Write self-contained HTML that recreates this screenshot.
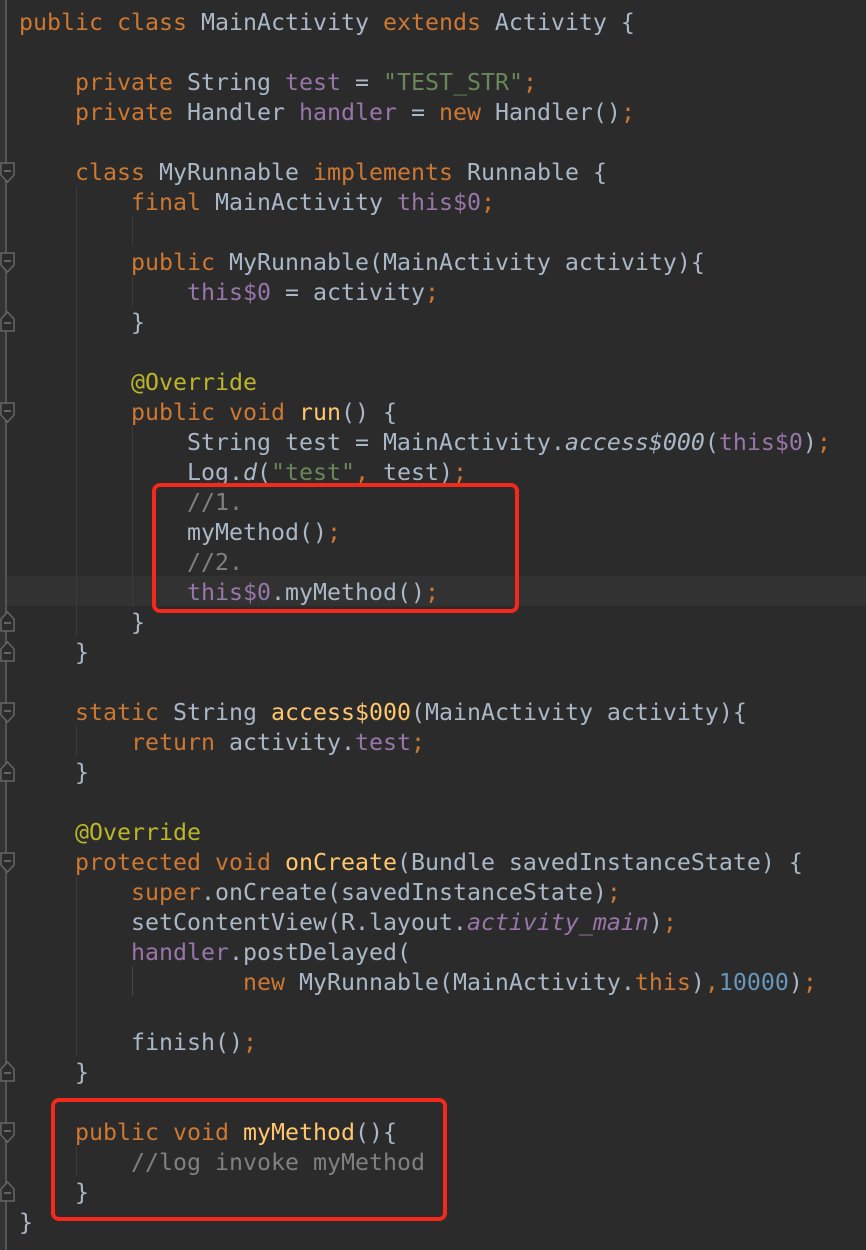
<!DOCTYPE html>
<html><head><meta charset="utf-8"><style>
html,body{margin:0;padding:0;}
body{width:866px;height:1250px;background:#2b2b2b;position:relative;overflow:hidden;font-family:"DejaVu Sans Mono","Liberation Mono",monospace;font-size:23.25px;color:#a9b7c6;}
.gut{position:absolute;left:0;top:0;width:6px;height:1250px;background:#313335;}
.gl{position:absolute;left:5px;top:0;width:2px;height:1250px;background:#555;}
.l{position:absolute;left:19px;height:30px;line-height:30px;white-space:pre;margin-top:2px;}
.k{color:#cc7832}.f{color:#9876aa}.s{color:#6a8759}.c{color:#808080}.a{color:#bbb529}.m{color:#ffc66d}.n{color:#6897bb}.i{font-style:italic}
.fi{color:#9876aa;font-style:italic}
.cur{position:absolute;left:7px;top:576px;width:859px;height:30px;background:#323232;}
.ig{position:absolute;width:1px;background:#3b3b3b;}
.box{position:absolute;border:4px solid #f5281c;border-radius:8px;box-sizing:border-box;}
svg.fm{position:absolute;left:0;}
</style></head><body>
<div class="gut"></div><div class="gl"></div>
<div class="cur"></div>
<div class="ig" style="left:76px;top:186px;height:450px"></div>
<div class="ig" style="left:132px;top:216px;height:30px"></div>
<div class="ig" style="left:132px;top:276px;height:30px"></div>
<div class="ig" style="left:132px;top:426px;height:180px"></div>
<div class="ig" style="left:76px;top:726px;height:30px"></div>
<div class="ig" style="left:76px;top:876px;height:180px"></div>
<div class="ig" style="left:132px;top:966px;height:30px;background:#444"></div>
<div class="ig" style="left:76px;top:1146px;height:30px"></div>

<svg class="fm" style="top:162px" width="16" height="22"><path d="M1 1H14V13L7.5 20L1 13Z" fill="#2b2b2b" stroke="#666" stroke-width="1.5"/><path d="M4 9H11" stroke="#777" stroke-width="1.5"/></svg>
<svg class="fm" style="top:252px" width="16" height="22"><path d="M1 1H14V13L7.5 20L1 13Z" fill="#2b2b2b" stroke="#666" stroke-width="1.5"/><path d="M4 9H11" stroke="#777" stroke-width="1.5"/></svg>
<svg class="fm" style="top:310px" width="16" height="22"><path d="M1 21H14V9L7.5 2L1 9Z" fill="#2b2b2b" stroke="#666" stroke-width="1.5"/><path d="M4 13H11" stroke="#777" stroke-width="1.5"/></svg>
<svg class="fm" style="top:402px" width="16" height="22"><path d="M1 1H14V13L7.5 20L1 13Z" fill="#2b2b2b" stroke="#666" stroke-width="1.5"/><path d="M4 9H11" stroke="#777" stroke-width="1.5"/></svg>
<svg class="fm" style="top:610px" width="16" height="22"><path d="M1 21H14V9L7.5 2L1 9Z" fill="#2b2b2b" stroke="#666" stroke-width="1.5"/><path d="M4 13H11" stroke="#777" stroke-width="1.5"/></svg>
<svg class="fm" style="top:640px" width="16" height="22"><path d="M1 21H14V9L7.5 2L1 9Z" fill="#2b2b2b" stroke="#666" stroke-width="1.5"/><path d="M4 13H11" stroke="#777" stroke-width="1.5"/></svg>
<svg class="fm" style="top:702px" width="16" height="22"><path d="M1 1H14V13L7.5 20L1 13Z" fill="#2b2b2b" stroke="#666" stroke-width="1.5"/><path d="M4 9H11" stroke="#777" stroke-width="1.5"/></svg>
<svg class="fm" style="top:760px" width="16" height="22"><path d="M1 21H14V9L7.5 2L1 9Z" fill="#2b2b2b" stroke="#666" stroke-width="1.5"/><path d="M4 13H11" stroke="#777" stroke-width="1.5"/></svg>
<svg class="fm" style="top:852px" width="16" height="22"><path d="M1 1H14V13L7.5 20L1 13Z" fill="#2b2b2b" stroke="#666" stroke-width="1.5"/><path d="M4 9H11" stroke="#777" stroke-width="1.5"/></svg>
<svg class="fm" style="top:1060px" width="16" height="22"><path d="M1 21H14V9L7.5 2L1 9Z" fill="#2b2b2b" stroke="#666" stroke-width="1.5"/><path d="M4 13H11" stroke="#777" stroke-width="1.5"/></svg>
<svg class="fm" style="top:1122px" width="16" height="22"><path d="M1 1H14V13L7.5 20L1 13Z" fill="#2b2b2b" stroke="#666" stroke-width="1.5"/><path d="M4 9H11" stroke="#777" stroke-width="1.5"/></svg>
<svg class="fm" style="top:1180px" width="16" height="22"><path d="M1 21H14V9L7.5 2L1 9Z" fill="#2b2b2b" stroke="#666" stroke-width="1.5"/><path d="M4 13H11" stroke="#777" stroke-width="1.5"/></svg>

<div class="l" style="top:6px"><span class="k">public class</span> MainActivity <span class="k">extends</span> Activity {</div>
<div class="l" style="top:66px">    <span class="k">private</span> String <span class="f">test</span> = <span class="s">"TEST_STR"</span><span class="k">;</span></div>
<div class="l" style="top:96px">    <span class="k">private</span> Handler <span class="f">handler</span> = <span class="k">new</span> Handler()<span class="k">;</span></div>
<div class="l" style="top:156px">    <span class="k">class</span> MyRunnable <span class="k">implements</span> Runnable {</div>
<div class="l" style="top:186px">        <span class="k">final</span> MainActivity <span class="f">this$0</span><span class="k">;</span></div>
<div class="l" style="top:246px">        <span class="k">public</span> MyRunnable(MainActivity activity){</div>
<div class="l" style="top:276px">            <span class="f">this$0</span> = activity<span class="k">;</span></div>
<div class="l" style="top:306px">        }</div>
<div class="l" style="top:366px">        <span class="a">@Override</span></div>
<div class="l" style="top:396px">        <span class="k">public void</span> <span class="m">run</span>() {</div>
<div class="l" style="top:426px">            String test = MainActivity.<span class="i">access$000</span>(<span class="f">this$0</span>)<span class="k">;</span></div>
<div class="l" style="top:456px">            Log.<span class="i">d</span>(<span class="s">"test"</span><span class="k">,</span> test)<span class="k">;</span></div>
<div class="l" style="top:486px">            <span class="c">//1.</span></div>
<div class="l" style="top:516px">            myMethod()<span class="k">;</span></div>
<div class="l" style="top:546px">            <span class="c">//2.</span></div>
<div class="l" style="top:576px">            <span class="f">this$0</span>.myMethod()<span class="k">;</span></div>
<div class="l" style="top:606px">        }</div>
<div class="l" style="top:636px">    }</div>
<div class="l" style="top:696px">    <span class="k">static</span> String <span class="m">access$000</span>(MainActivity activity){</div>
<div class="l" style="top:726px">        <span class="k">return</span> activity.<span class="f">test</span><span class="k">;</span></div>
<div class="l" style="top:756px">    }</div>
<div class="l" style="top:816px">    <span class="a">@Override</span></div>
<div class="l" style="top:846px">    <span class="k">protected void</span> <span class="m">onCreate</span>(Bundle savedInstanceState) {</div>
<div class="l" style="top:876px">        <span class="k">super</span>.onCreate(savedInstanceState)<span class="k">;</span></div>
<div class="l" style="top:906px">        setContentView(R.layout.<span class="fi">activity_main</span>)<span class="k">;</span></div>
<div class="l" style="top:936px">        <span class="f">handler</span>.postDelayed(</div>
<div class="l" style="top:966px">                <span class="k">new</span> MyRunnable(MainActivity.<span class="k">this</span>)<span class="k">,</span><span class="n">10000</span>)<span class="k">;</span></div>
<div class="l" style="top:1026px">        finish()<span class="k">;</span></div>
<div class="l" style="top:1056px">    }</div>
<div class="l" style="top:1116px">    <span class="k">public void</span> <span class="m">myMethod</span>(){</div>
<div class="l" style="top:1146px">        <span class="c">//log invoke myMethod</span></div>
<div class="l" style="top:1176px">    }</div>
<div class="l" style="top:1206px">}</div>

<div class="box" style="left:152px;top:483px;width:367px;height:130px"></div>
<div class="box" style="left:51px;top:1098px;width:396px;height:123px"></div>
</body></html>
